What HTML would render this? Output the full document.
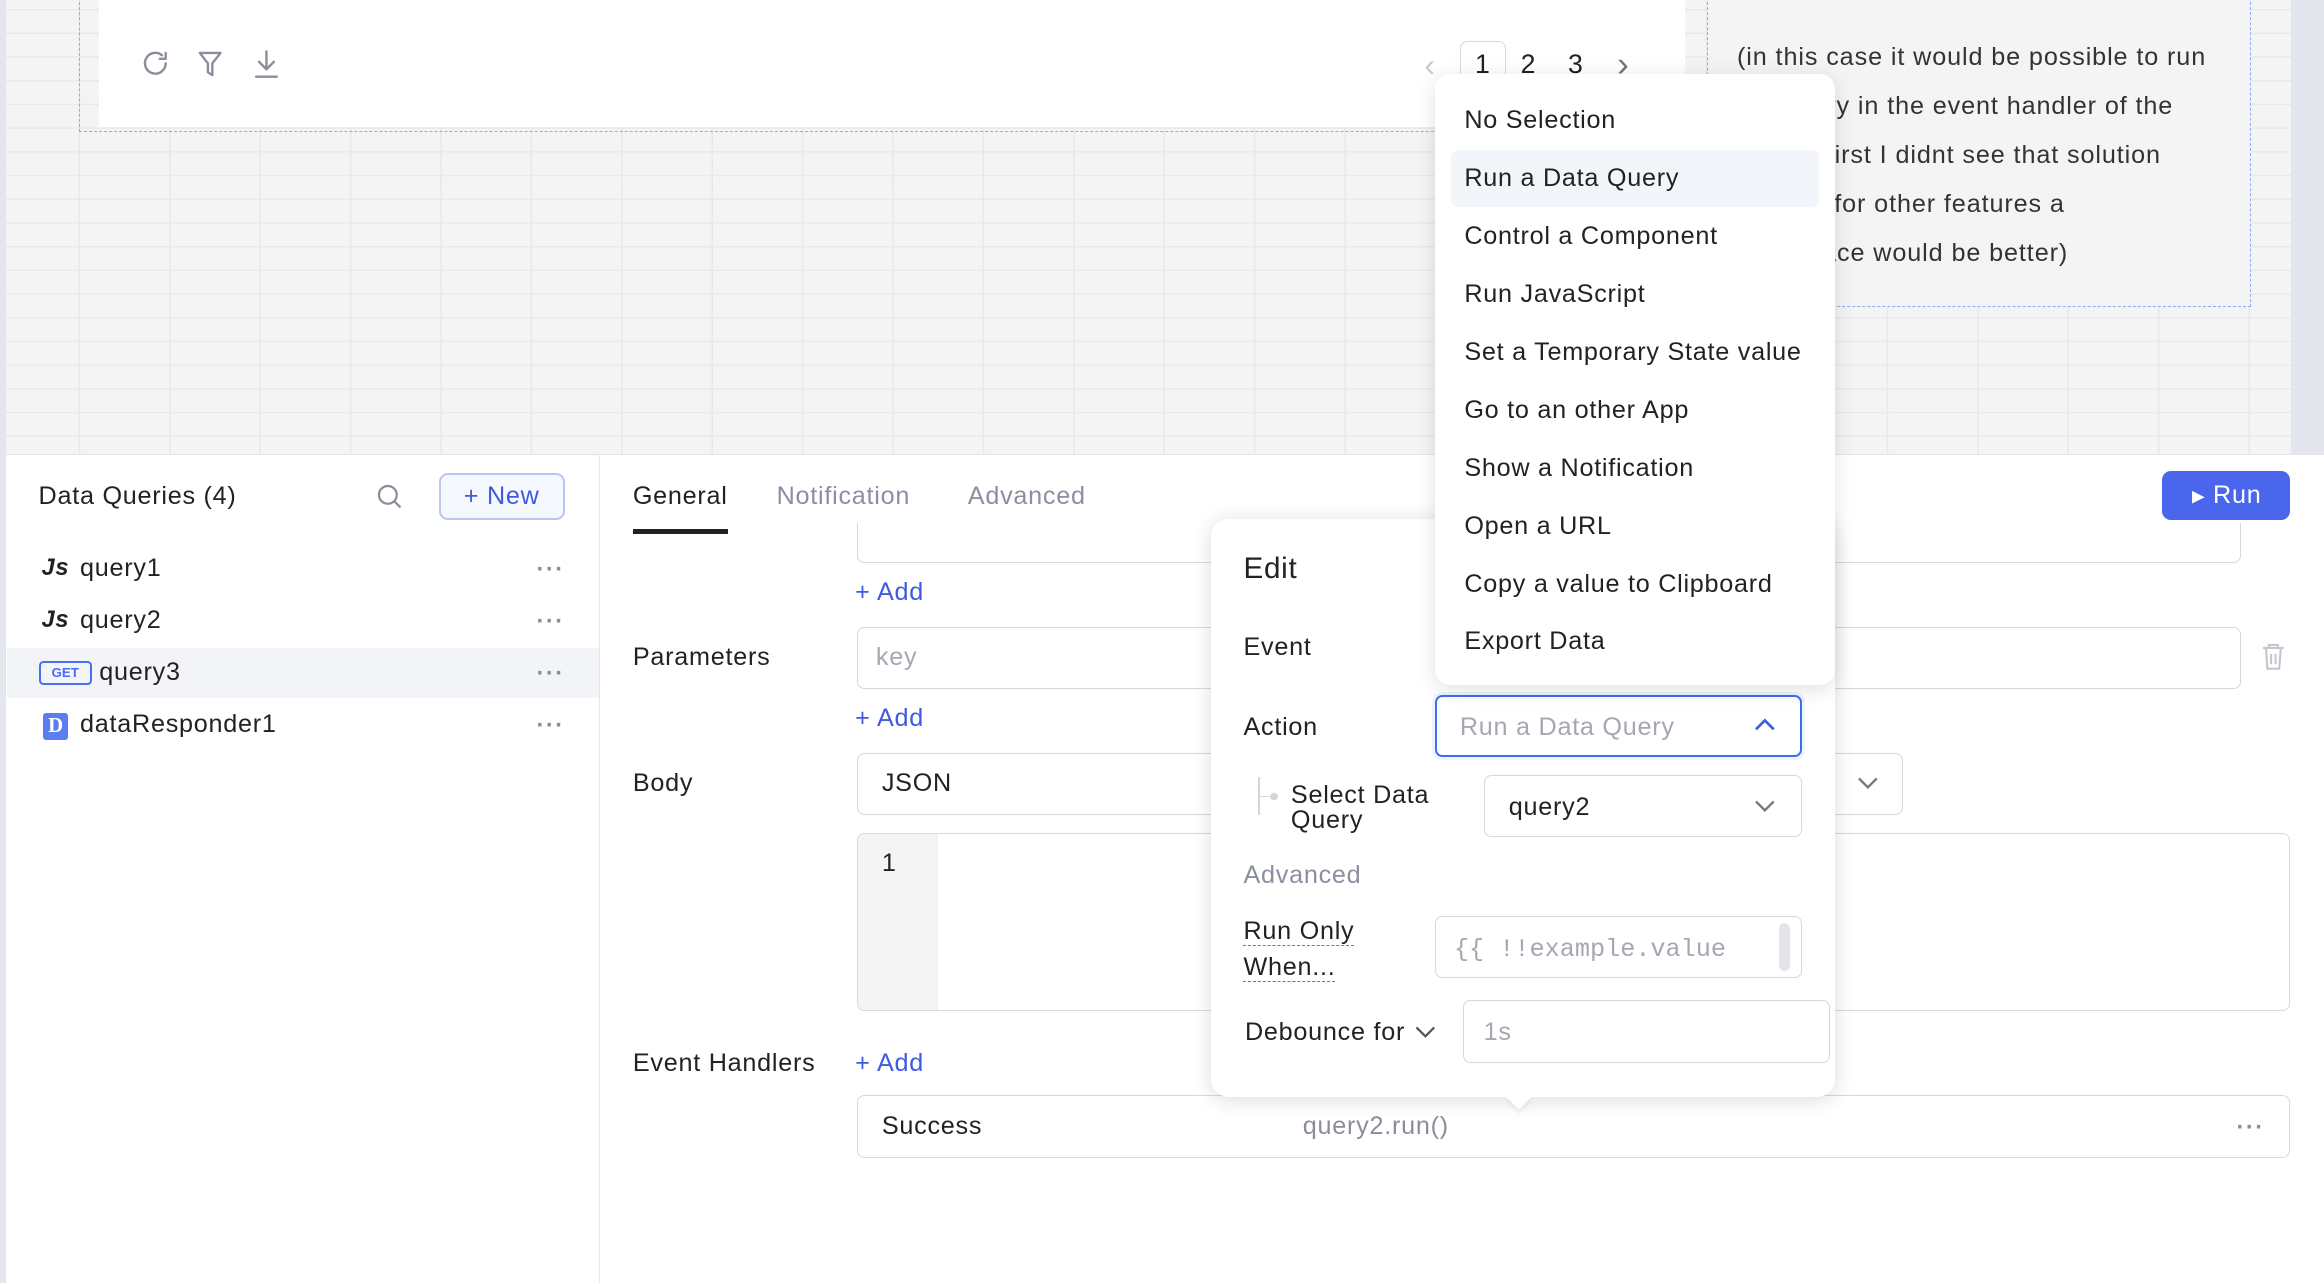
<!DOCTYPE html>
<html><head><meta charset="utf-8"><style>
*{box-sizing:border-box;margin:0;padding:0}
html,body{width:2324px;height:1284px;overflow:hidden;background:#fff}
#r{zoom:1.4821;width:1568px;height:866px;position:relative;font-family:"Liberation Sans",sans-serif;color:#222;font-size:17px;overflow:hidden;letter-spacing:0.5px}
.a{position:absolute;white-space:nowrap}
.canvas{left:0;top:0;width:1568px;height:306px;background:#e4e6ee}
.grid{left:4px;top:0;width:1542px;height:306px;background-color:#f4f4f5;
background-image:linear-gradient(#e9e9eb 1px,transparent 1px),linear-gradient(90deg,#e8e8ea 1px,transparent 1px);
background-size:100% 16px,61px 100%;background-position:0 6px,49px 0}
.inp{position:absolute;border:1px solid #d7d8dd;border-radius:5px;background:#fff}
.ph{color:#a5a7b2}
.blue{color:#3e5be0}
.dots{position:absolute;color:#8b8e9a;font-size:16px;letter-spacing:1px;font-weight:bold}
.lbl{position:absolute;white-space:nowrap;line-height:24px}
</style></head><body><div id="r">
<div class="a canvas"></div>
<div class="a grid"></div>
<div class="a" style="left:53px;top:-2px;width:1100px;height:91px;border:1px dashed #8fa9f5;border-top:none"></div>
<div class="a" style="left:67px;top:0;width:1070px;height:86px;background:#fff"></div>
<svg class="a" style="left:94px;top:32px" width="100" height="24" viewBox="0 0 100 24" fill="none" stroke="#8a8d99" stroke-width="1.6" stroke-linecap="round" stroke-linejoin="round">
<path d="M18 11a7 7 0 1 1-2.5-5.4M18 4v4h-4"/>
<path d="M41 4h14l-5.5 7v8l-3-2v-6z"/>
<path d="M86 3v12M81 10l5 5 5-5M79 20h14"/>
</svg>
<div class="a" style="left:961px;top:31px;color:#c8cad2;font-size:22px">&#x2039;</div>
<div class="a" style="left:985px;top:28px;width:31px;height:32px;border:1px solid #d7d8dd;border-radius:5px;text-align:center;line-height:30px;font-size:18px">1</div>
<div class="a" style="left:1026px;top:33px;font-size:18px">2</div>
<div class="a" style="left:1058px;top:33px;font-size:18px">3</div>
<div class="a" style="left:1091px;top:30px;color:#777;font-size:24px">&#x203A;</div>
<div class="a" style="left:1152px;top:-2px;width:367px;height:209px;border:1px dashed #8fa9f5;background:#f4f4f5"></div>
<div class="a" style="left:1172px;top:22px;line-height:33.2px;font-size:17px;color:#333;white-space:normal;width:340px;letter-spacing:0.6px">(in this case it would be possible to run<br>the query in the event handler of the<br>query. First I didnt see that solution<br>(maybe for other features a<br>workspace would be better)</div>

<div class="a" style="left:0;top:306px;width:1568px;height:560px;background:#fff;border-top:1px solid #e4e5ea"></div>
<div class="a" style="left:0;top:306px;width:4px;height:560px;background:#e4e6ee"></div>
<div class="a" style="left:404px;top:307px;width:1px;height:559px;background:#e6e7eb"></div>
<div class="lbl" style="left:26px;top:323px">Data Queries (4)</div>
<svg class="a" style="left:254px;top:326px" width="18" height="18" viewBox="0 0 18 18" fill="none" stroke="#8a8d99" stroke-width="1.5"><circle cx="8" cy="8" r="6"/><path d="M12.5 12.5l4 4"/></svg>
<div class="a" style="left:296px;top:319px;width:85px;height:32px;border:1.5px solid #b9c5f6;border-radius:6px;background:#f6f8ff;color:#3e5be0;text-align:center;line-height:29px;font-size:17px">+ New</div>
<div class="a" style="left:5px;top:437px;width:399px;height:34px;background:#f2f4f8"></div>
<div class="lbl" style="left:28px;top:372px;font-weight:bold;font-style:italic;font-size:16px">Js</div><div class="lbl" style="left:54px;top:372px">query1</div>
<div class="lbl" style="left:28px;top:407px;font-weight:bold;font-style:italic;font-size:16px">Js</div><div class="lbl" style="left:54px;top:407px">query2</div>
<div class="a" style="left:26px;top:446px;width:36px;height:16px;border:1.5px solid #4a6ef0;border-radius:3px;color:#4a6ef0;font-size:9px;font-weight:bold;text-align:center;line-height:13px;letter-spacing:0">GET</div><div class="lbl" style="left:67px;top:442px">query3</div>
<div class="a" style="left:29px;top:481px;width:17px;height:18px;background:#5a7ef0;border-radius:2px;color:#fff;font-family:'Liberation Serif',serif;font-weight:bold;font-size:14px;text-align:center;line-height:18px;letter-spacing:0">D</div><div class="lbl" style="left:54px;top:477px">dataResponder1</div>
<div class="dots" style="left:362px;top:376px">···</div>
<div class="dots" style="left:362px;top:411px">···</div>
<div class="dots" style="left:362px;top:446px">···</div>
<div class="dots" style="left:362px;top:481px">···</div>

<div class="inp" style="left:578px;top:340px;width:934px;height:40px;border-top:none;border-radius:0 0 5px 5px"></div>
<div class="a" style="left:405px;top:307px;width:1163px;height:46px;background:#fff"></div>
<div class="lbl" style="left:427px;top:323px">General</div>
<div class="a" style="left:427px;top:357px;width:64px;height:3px;background:#222"></div>
<div class="lbl" style="left:524px;top:323px;color:#8b8fa0">Notification</div>
<div class="lbl" style="left:653px;top:323px;color:#8b8fa0">Advanced</div>
<div class="a" style="left:1459px;top:318px;width:86px;height:33px;background:#4a66ec;border-radius:6px;color:#fff;line-height:33px;font-size:17px;padding-left:20px"><span style="font-size:11px;vertical-align:1px">&#9654;</span> Run</div>
<div class="lbl blue" style="left:577px;top:388px">+ Add</div>
<div class="lbl" style="left:427px;top:432px">Parameters</div>
<div class="inp" style="left:578px;top:423px;width:934px;height:42px"></div>
<div class="lbl ph" style="left:591px;top:432px">key</div>
<svg class="a" style="left:1525px;top:433px" width="18" height="20" viewBox="0 0 18 20" fill="none" stroke="#c4c6cf" stroke-width="1.4"><path d="M2 4h14M6 4V2h6v2M4 4l1 14h8l1-14M7.5 8v7M10.5 8v7"/></svg>
<div class="lbl blue" style="left:577px;top:473px">+ Add</div>
<div class="lbl" style="left:427px;top:517px">Body</div>
<div class="inp" style="left:578px;top:508px;width:706px;height:42px"></div>
<div class="lbl" style="left:595px;top:517px">JSON</div>
<svg class="a" style="left:1252px;top:522px" width="16" height="12" viewBox="0 0 16 12" fill="none" stroke="#777" stroke-width="1.6"><path d="M2 3l6 6 6-6"/></svg>
<div class="inp" style="left:578px;top:562px;width:967px;height:120px;overflow:hidden"><div style="position:absolute;left:0;top:0;width:54px;height:120px;background:#f4f4f5"></div></div>
<div class="lbl" style="left:595px;top:571px">1</div>
<div class="lbl" style="left:427px;top:706px">Event Handlers</div>
<div class="lbl blue" style="left:577px;top:706px">+ Add</div>
<div class="inp" style="left:578px;top:739px;width:967px;height:42px"></div>
<div class="lbl" style="left:595px;top:748px">Success</div>
<div class="lbl" style="left:879px;top:748px;color:#8b8e9a">query2.run()</div>
<div class="dots" style="left:1509px;top:752px">···</div>

<div class="a" style="left:817px;top:350px;width:421px;height:390px;background:#fff;border-radius:12px;box-shadow:0 2px 14px rgba(0,0,0,.14)"></div>
<div class="a" style="left:1019px;top:734px;width:12px;height:12px;background:#fff;transform:rotate(45deg);box-shadow:2px 2px 3px rgba(0,0,0,.06)"></div>
<div class="lbl" style="left:839px;top:372px;font-size:20px;line-height:24px">Edit</div>
<div class="lbl" style="left:839px;top:425px">Event</div>
<div class="lbl" style="left:839px;top:479px">Action</div>
<div class="a" style="left:966px;top:467px;width:252px;height:46px;border-radius:7px;background:#eef3fe"></div>
<div class="a" style="left:968px;top:469px;width:248px;height:42px;border:1.5px solid #3d6ef0;border-radius:5px;background:#fff"></div>
<div class="lbl ph" style="left:985px;top:479px">Run a Data Query</div>
<svg class="a" style="left:1183px;top:483px" width="16" height="12" viewBox="0 0 16 12" fill="none" stroke="#3e5be0" stroke-width="1.8"><path d="M2 9l6-6 6 6"/></svg>
<div class="a" style="left:849px;top:524px;width:1px;height:26px;background:#d5d6dc"></div>
<div class="a" style="left:849px;top:537px;width:9px;height:1px;background:#d5d6dc"></div>
<div class="a" style="left:857px;top:535px;width:5px;height:5px;border-radius:50%;background:#d5d6dc"></div>
<div class="a" style="left:871px;top:528px;line-height:17px;font-size:17px">Select Data<br>Query</div>
<div class="inp" style="left:1001px;top:523px;width:215px;height:42px"></div>
<div class="lbl" style="left:1018px;top:533px">query2</div>
<svg class="a" style="left:1183px;top:538px" width="16" height="12" viewBox="0 0 16 12" fill="none" stroke="#777" stroke-width="1.6"><path d="M2 3l6 6 6-6"/></svg>
<div class="lbl" style="left:839px;top:579px;color:#8b8fa0">Advanced</div>
<div class="a" style="left:839px;top:617px;line-height:24px;font-size:17px"><span style="border-bottom:1px dashed #777">Run Only</span><br><span style="border-bottom:1px dashed #777">When...</span></div>
<div class="inp" style="left:968px;top:618px;width:248px;height:42px"></div>
<div class="lbl" style="left:981px;top:629px;font-family:'Liberation Mono',monospace;color:#a5a7b2;font-size:17px;letter-spacing:0">{{ !!example.value</div>
<div class="a" style="left:1200px;top:623px;width:8px;height:32px;border-radius:4px;background:#e4e5ea"></div>
<div class="lbl" style="left:840px;top:685px">Debounce for</div>
<svg class="a" style="left:955px;top:690px" width="14" height="12" viewBox="0 0 14 12" fill="none" stroke="#555" stroke-width="1.5"><path d="M1 3l6 6 6-6"/></svg>
<div class="inp" style="left:987px;top:675px;width:248px;height:42px"></div>
<div class="lbl ph" style="left:1001px;top:685px">1s</div>

<div class="a" style="left:968px;top:50px;width:270px;height:412px;background:#fff;border-radius:10px;box-shadow:0 3px 14px rgba(0,0,0,.12)"></div>
<div class="a" style="left:979px;top:101px;width:248px;height:39px;background:#f2f5fa;border-radius:5px"></div>
<div class="a" style="left:988px;top:62px;line-height:39.1px;font-size:17px;color:#222">No Selection<br>Run a Data Query<br>Control a Component<br>Run JavaScript<br>Set a Temporary State value<br>Go to an other App<br>Show a Notification<br>Open a URL<br>Copy a value to Clipboard<br>Export Data</div>
</div></body></html>
